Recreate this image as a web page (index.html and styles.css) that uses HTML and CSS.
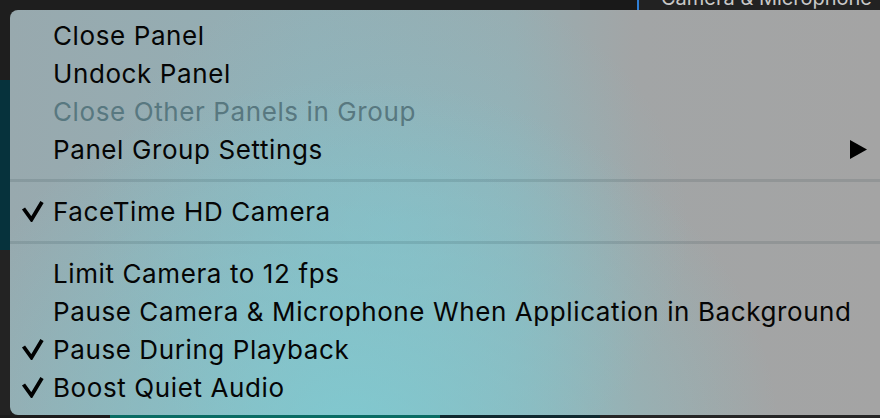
FILE: index.html
```html
<!DOCTYPE html>
<html lang="en">
<head>
<meta charset="utf-8">
<title>Panel menu</title>
<link rel="stylesheet" href="styles.css">
</head>
<body>
<div class="app">
  <header class="tabs">
    <div class="tab"><span class="tab-label">Camera &amp; Microphone</span></div>
  </header>
  <div class="workspace">
    <div class="menu" role="menu">
      <div class="item"><span class="mark"></span><span class="label">Close Panel</span></div>
      <div class="item"><span class="mark"></span><span class="label">Undock Panel</span></div>
      <div class="item disabled"><span class="mark"></span><span class="label">Close Other Panels in Group</span></div>
      <div class="item"><span class="mark"></span><span class="label">Panel Group Settings</span>
        <svg class="arrow" width="17" height="19" viewBox="0 0 17 19"><polygon points="0,0 17,9.5 0,19"/></svg>
      </div>
      <div class="sep"></div>
      <div class="item"><span class="mark"><svg class="check" width="23" height="22" viewBox="0 0 23 22"><polyline points="2.5,8.5 10.5,19.5 21,2"/></svg></span><span class="label">FaceTime HD Camera</span></div>
      <div class="sep"></div>
      <div class="item"><span class="mark"></span><span class="label">Limit Camera to 12 fps</span></div>
      <div class="item"><span class="mark"></span><span class="label">Pause Camera &amp; Microphone When Application in Background</span></div>
      <div class="item"><span class="mark"><svg class="check" width="23" height="22" viewBox="0 0 23 22"><polyline points="2.5,8.5 10.5,19.5 21,2"/></svg></span><span class="label">Pause During Playback</span></div>
      <div class="item"><span class="mark"><svg class="check" width="23" height="22" viewBox="0 0 23 22"><polyline points="2.5,8.5 10.5,19.5 21,2"/></svg></span><span class="label">Boost Quiet Audio</span></div>
    </div>
  </div>
</div>
</body>
</html>
```
FILE: styles.css
```css
* { box-sizing: border-box; }

html, body {
  margin: 0;
  padding: 0;
  background: #1e1e1e;
}

.app {
  width: 880px;
  height: 418px;
  overflow: hidden;
  display: flex;
  flex-direction: column;
  background:
    linear-gradient(to right, #1c1c1c 0 110px, #0a6c64 110px 440px, #10292f 440px 600px, #262626 600px) left bottom / 100% 3px no-repeat,
    linear-gradient(to bottom, #1e1e1e 0 80px, #06323c 80px 250px, #232323 250px) left top / 10px 100% no-repeat,
    #1e1e1e;
}

.tabs {
  height: 10px;
  flex: none;
  display: flex;
  justify-content: flex-end;
  overflow: hidden;
  background: linear-gradient(to right, #1e1e1e 0 580px, #191919 580px);
}

.tab {
  width: 243px;
  border-left: 2px solid #2f7fd6;
  background: #222222;
  padding-left: 22px;
  overflow: hidden;
}

.tab-label {
  display: block;
  margin-top: -14px;
  font-family: "Inter", "Liberation Sans", sans-serif;
  font-size: 20px;
  line-height: 24px;
  color: #c8c8c8;
  white-space: nowrap;
}

.workspace {
  flex: none;
  display: flex;
  padding-left: 10px;
}

.menu {
  width: 870px;
  height: 405px;
  padding: 6px 0 9px;
  border-radius: 8px 0 0 8px;
  font-family: "Inter", "Liberation Sans", sans-serif;
  font-size: 26px;
  letter-spacing: 0.6px;
  color: #050505;
  background:
    radial-gradient(ellipse 430px 360px at 340px 430px, rgba(125, 205, 212, 0.85), rgba(125, 205, 212, 0) 100%),
    radial-gradient(ellipse 300px 260px at 380px 220px, rgba(130, 195, 205, 0.5), rgba(130, 195, 205, 0) 100%),
    linear-gradient(to right, #98a9ae 0%, #93afb5 35%, #98adb1 58%, #a2a5a6 72%, #a4a4a4 100%);
}

.item {
  height: 38px;
  display: grid;
  grid-template-columns: 43px 1fr auto;
  align-items: center;
  padding-right: 13px;
  white-space: nowrap;
}

.mark {
  display: flex;
  align-items: center;
  padding-left: 11px;
}

.check {
  display: block;
  fill: none;
  stroke: #000;
  stroke-width: 3.8;
  stroke-linejoin: miter;
  stroke-linecap: butt;
}

.arrow {
  display: block;
  fill: #000;
}

.disabled {
  color: #587880;
}

.sep {
  height: 24px;
  display: flex;
  align-items: center;
}

.sep::before {
  content: "";
  display: block;
  width: 100%;
  height: 3px;
  background: rgba(0, 25, 35, 0.11);
}
```
